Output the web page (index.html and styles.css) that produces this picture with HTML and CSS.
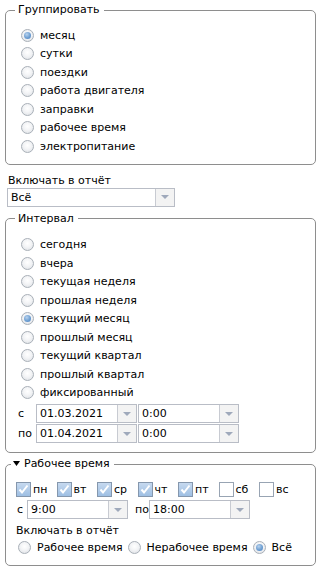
FILE: index.html
```html
<!DOCTYPE html>
<html>
<head>
<meta charset="utf-8">
<link rel="stylesheet" href="styles.css">
</head>
<body>
<fieldset class="fs fs-group">
  <legend class="lg">Группировать</legend>
  <div class="fs-body b1">
    <label class="row"><span class="radio on"></span>месяц</label>
    <label class="row"><span class="radio"></span>сутки</label>
    <label class="row"><span class="radio"></span>поездки</label>
    <label class="row"><span class="radio"></span>работа двигателя</label>
    <label class="row"><span class="radio"></span>заправки</label>
    <label class="row"><span class="radio"></span>рабочее время</label>
    <label class="row"><span class="radio"></span>электропитание</label>
  </div>
</fieldset>

<div class="incl-label">Включать в отчёт</div>
<div class="combo c-incl"><span class="val">Всё</span><span class="trig"></span></div>

<fieldset class="fs fs-int">
  <legend class="lg">Интервал</legend>
  <div class="fs-body b2">
    <label class="row"><span class="radio"></span>сегодня</label>
    <label class="row"><span class="radio"></span>вчера</label>
    <label class="row"><span class="radio"></span>текущая неделя</label>
    <label class="row"><span class="radio"></span>прошлая неделя</label>
    <label class="row"><span class="radio on"></span>текущий месяц</label>
    <label class="row"><span class="radio"></span>прошлый месяц</label>
    <label class="row"><span class="radio"></span>текущий квартал</label>
    <label class="row"><span class="radio"></span>прошлый квартал</label>
    <label class="row"><span class="radio"></span>фиксированный</label>
    <div class="drow">
      <span class="dl">с</span>
      <div class="combo c-date"><span class="val">01.03.2021</span><span class="trig"></span></div>
      <div class="combo c-time"><span class="val">0:00</span><span class="trig"></span></div>
    </div>
    <div class="drow">
      <span class="dl">по</span>
      <div class="combo c-date"><span class="val">01.04.2021</span><span class="trig"></span></div>
      <div class="combo c-time"><span class="val">0:00</span><span class="trig"></span></div>
    </div>
  </div>
</fieldset>

<fieldset class="fs fs-work">
  <legend class="lg lg3"><svg class="tri" width="7" height="5" viewBox="0 0 7 5"><path d="M0 0h7L3.5 5z" fill="#000"/></svg>Рабочее время</legend>
  <div class="fs-body b3">
    <div class="days">
      <label class="day"><span class="cb on"><svg width="13" height="13" viewBox="0 0 13 13"><path d="M2.5 6.5l2.5 3 5.5-7" fill="none" stroke="#fff" stroke-width="2"/></svg></span>пн</label>
      <label class="day"><span class="cb on"><svg width="13" height="13" viewBox="0 0 13 13"><path d="M2.5 6.5l2.5 3 5.5-7" fill="none" stroke="#fff" stroke-width="2"/></svg></span>вт</label>
      <label class="day"><span class="cb on"><svg width="13" height="13" viewBox="0 0 13 13"><path d="M2.5 6.5l2.5 3 5.5-7" fill="none" stroke="#fff" stroke-width="2"/></svg></span>ср</label>
      <label class="day"><span class="cb on"><svg width="13" height="13" viewBox="0 0 13 13"><path d="M2.5 6.5l2.5 3 5.5-7" fill="none" stroke="#fff" stroke-width="2"/></svg></span>чт</label>
      <label class="day"><span class="cb on"><svg width="13" height="13" viewBox="0 0 13 13"><path d="M2.5 6.5l2.5 3 5.5-7" fill="none" stroke="#fff" stroke-width="2"/></svg></span>пт</label>
      <label class="day"><span class="cb"></span>сб</label>
      <label class="day"><span class="cb"></span>вс</label>
    </div>
    <div class="trow">
      <span class="tl">с</span>
      <div class="combo c-wt"><span class="val">9:00</span><span class="trig"></span></div>
      <span class="tl2">по</span>
      <div class="combo c-wt"><span class="val">18:00</span><span class="trig"></span></div>
    </div>
    <div class="incl2">Включать в отчёт</div>
    <div class="rrow">
      <label class="ritem"><span class="radio"></span>Рабочее время</label>
      <label class="ritem"><span class="radio"></span>Нерабочее время</label>
      <label class="ritem"><span class="radio on"></span>Всё</label>
    </div>
  </div>
</fieldset>
</body>
</html>
```

FILE: styles.css
```css
html, body {
  margin: 0;
  background: #fff;
}
body {
  padding: 3px 4px 0 5px;
  font-family: "DejaVu Sans", Verdana, sans-serif;
  font-size: 11px;
  color: #000;
}
.fs {
  margin: 0;
  padding: 0;
  border: 1px solid #8e8e8e;
  border-radius: 5px;
  min-width: 0;
}
.lg {
  margin-left: 9px;
  padding: 0 4px 0 3px;
  line-height: 14px;
  height: 14px;
}
.lg3 {
  margin-left: 5px;
  padding-left: 2px;
  display: flex;
  align-items: center;
}
.tri {
  margin-right: 4px;
  margin-top: -1px;
}
.fs-body {
  padding-left: 15px;
}
.b1 {
  padding-top: 9px;
  padding-bottom: 8px;
}
.b2 {
  padding-top: 10px;
  padding-bottom: 9px;
}
.b3 {
  padding-left: 10px;
  padding-top: 9px;
  padding-bottom: 9px;
}
.row {
  display: flex;
  align-items: center;
  height: 18.5px;
}
.radio {
  box-sizing: border-box;
  width: 13px;
  height: 13px;
  border-radius: 50%;
  border: 1px solid #a9b0b8;
  background: radial-gradient(circle at 50% 40%, #ffffff 0%, #f3f4f6 45%, #d9dde2 100%);
  margin-right: 6px;
  flex: none;
  display: flex;
  align-items: center;
  justify-content: center;
}
.radio.on::after {
  content: "";
  width: 7px;
  height: 7px;
  border-radius: 50%;
  background: radial-gradient(circle at 40% 35%, #b9d3ee 0%, #6e9fd2 55%, #4a7fbf 100%);
}
.incl-label {
  margin-top: 9px;
  padding-left: 3px;
  line-height: 14px;
}
.combo {
  box-sizing: border-box;
  display: flex;
  height: 19px;
  border: 1px solid #b9bdc6;
  background: #fff;
}
.combo .val {
  flex: 1;
  padding-left: 3px;
  line-height: 17px;
  white-space: nowrap;
}
.combo .trig {
  width: 18px;
  flex: none;
  border-left: 1px solid #c8cbd2;
  background: #f3f3f3 no-repeat center / 8px 4px;
  background-image: url("data:image/svg+xml;utf8,<svg xmlns='http://www.w3.org/2000/svg' width='8' height='4'><path d='M0 0h8L4 4z' fill='%239fa9bb'/></svg>");
}
.c-incl {
  width: 168px;
  margin-left: 2px;
  margin-bottom: 5px;
}
.drow {
  display: flex;
  align-items: center;
  margin-top: 2px;
}
.drow + .drow {
  margin-top: 1px;
}
.dl {
  width: 18px;
  margin-left: -3px;
}
.c-date {
  width: 101px;
}
.c-time {
  width: 101px;
  margin-left: 1px;
}
.fs-work {
  margin-top: 4px;
}
.days {
  display: flex;
  height: 18px;
  align-items: center;
}
.day {
  display: flex;
  align-items: center;
  width: 40.5px;
  flex: none;
}
.cb {
  box-sizing: border-box;
  width: 15px;
  height: 15px;
  border: 1px solid #98a4b3;
  background: #fff;
  margin-right: 2px;
  flex: none;
  display: flex;
  align-items: center;
  justify-content: center;
}
.cb.on {
  background: linear-gradient(#c6d9ef, #9ebfe3);
  border-color: #8597ad;
}
.trow {
  display: flex;
  align-items: center;
  margin-top: 2px;
}
.tl {
  width: 10px;
  padding-left: 1px;
}
.tl2 {
  width: 14px;
  margin-left: 7px;
}
.c-wt {
  width: 101px;
  height: 19px;
}
.incl2 {
  margin-top: 5px;
  line-height: 14px;
}
.rrow {
  display: flex;
  align-items: center;
  height: 18px;
  margin-left: 2px;
}
.ritem {
  display: flex;
  align-items: center;
  margin-right: 5px;
}
.ritem .radio {
  margin-right: 6px;
}
```
